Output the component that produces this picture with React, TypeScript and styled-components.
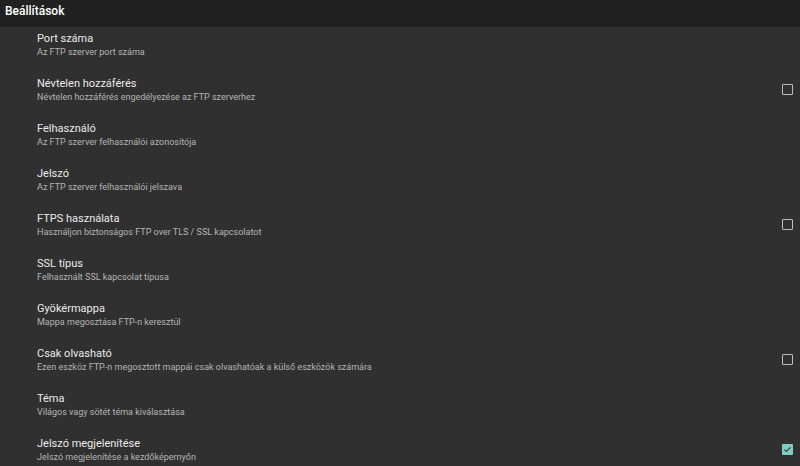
import { memo } from 'react';
import styled, { createGlobalStyle } from 'styled-components';

const GlobalStyle = createGlobalStyle`
  html, body {
    margin: 0;
    padding: 0;
    background-color: #303030;
    font-family: Roboto, 'Noto Sans', sans-serif;
    overflow: hidden;
  }
`;

const Page = styled.div`
  width: 800px;
  height: 466px;
  display: flex;
  flex-direction: column;
  background-color: #303030;
  overflow: hidden;
`;

const TopBar = styled.div`
  height: 27px;
  flex-shrink: 0;
  display: flex;
  align-items: center;
  padding: 0 0 6px 5px;
  box-sizing: border-box;
  background-color: #212121;
  color: #ffffff;
  font-size: 12px;
  font-weight: 500;
`;

const List = styled.div`
  display: flex;
  flex-direction: column;
`;

const Row = styled.div`
  height: 45px;
  flex-shrink: 0;
  box-sizing: border-box;
  display: flex;
  align-items: center;
  padding: 5px 7px 13px 37px;
`;

const TextBlock = styled.div`
  flex: 1;
  display: flex;
  flex-direction: column;

  .title {
    margin: 0;
    font-size: 11px;
    line-height: 13px;
    color: #ebebeb;
  }

  .summary {
    margin: 1px 0 0;
    font-size: 9px;
    line-height: 13px;
    color: #b5b5b5;
  }
`;

const Box = styled.div<{ $checked?: boolean }>`
  width: 11px;
  height: 11px;
  box-sizing: border-box;
  border-radius: 1px;
  display: flex;
  align-items: center;
  justify-content: center;
  margin-top: -2px;
  border: ${({ $checked }) => ($checked ? 'none' : '1.5px solid #bdbdbd')};
  background-color: ${({ $checked }) => ($checked ? '#80cbc4' : 'transparent')};
`;

interface SettingItemProps {
  title: string;
  summary: string;
  checkbox?: boolean;
  checked?: boolean;
}

const SettingItem = ({ title, summary, checkbox = false, checked = false }: SettingItemProps) => (
  <Row>
    <TextBlock>
      <p className="title">{title}</p>
      <p className="summary">{summary}</p>
    </TextBlock>
    {checkbox && (
      <Box $checked={checked}>
        {checked && (
          <svg width="9" height="9" viewBox="0 0 24 24">
            <path d="M4 12.5l5 5L20 6.5" fill="none" stroke="#263238" strokeWidth="3" />
          </svg>
        )}
      </Box>
    )}
  </Row>
);

const items: SettingItemProps[] = [
  { title: 'Port száma', summary: 'Az FTP szerver port száma' },
  {
    title: 'Névtelen hozzáférés',
    summary: 'Névtelen hozzáférés engedélyezése az FTP szerverhez',
    checkbox: true,
  },
  { title: 'Felhasználó', summary: 'Az FTP szerver felhasználói azonosítója' },
  { title: 'Jelszó', summary: 'Az FTP szerver felhasználói jelszava' },
  {
    title: 'FTPS használata',
    summary: 'Használjon biztonságos FTP over TLS / SSL kapcsolatot',
    checkbox: true,
  },
  { title: 'SSL típus', summary: 'Felhasznált SSL kapcsolat típusa' },
  { title: 'Gyökérmappa', summary: 'Mappa megosztása FTP-n keresztül' },
  {
    title: 'Csak olvasható',
    summary: 'Ezen eszköz FTP-n megosztott mappái csak olvashatóak a külső eszközök számára',
    checkbox: true,
  },
  { title: 'Téma', summary: 'Világos vagy sötét téma kiválasztása' },
  {
    title: 'Jelszó megjelenítése',
    summary: 'Jelszó megjelenítése a kezdőképernyőn',
    checkbox: true,
    checked: true,
  },
];

const App = () => (
  <>
    <GlobalStyle />
    <Page>
      <TopBar>Beállítások</TopBar>
      <List>
        {items.map((item) => (
          <SettingItem key={item.title} {...item} />
        ))}
      </List>
    </Page>
  </>
);

export default memo(App);
